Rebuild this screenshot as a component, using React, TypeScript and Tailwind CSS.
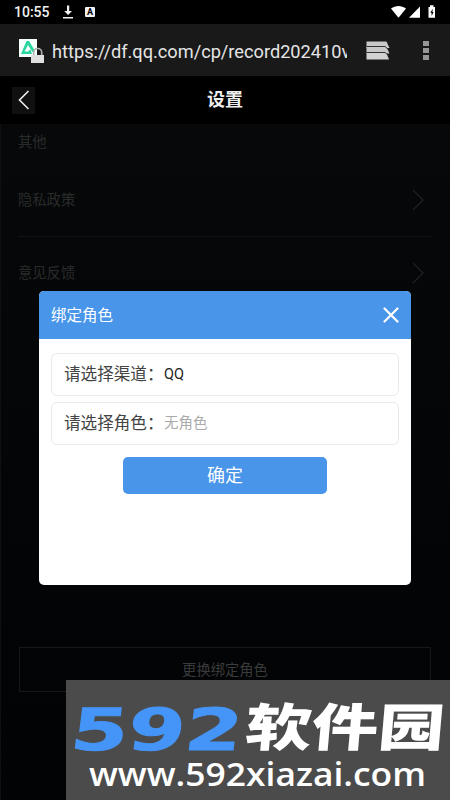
import { useState } from "react";

const StatusBar = () => (
  <div className="flex h-6 items-center justify-between bg-black pl-[14px] pr-[14px]">
    <div className="flex items-center">
      <span className="w-[49px] text-[14px] font-medium leading-6 text-[#f2f2f2]">10:55</span>
      <svg width="10" height="14" viewBox="0 0 10 14" fill="#f2f2f2">
        <path d="M4 0.500h2.200v5.500h2.800L5.100 10 1.200 6H4zM0 12h10v1.500H0z" />
      </svg>
      <span className="ml-3 flex h-[10px] w-[10px] items-center justify-center rounded-[1px] bg-[#f2f2f2] text-[9px] font-bold leading-none text-black">
        A
      </span>
    </div>
    <svg width="46" height="14" viewBox="0 0 46 14" fill="#fff">
      <path d="M1 3.600C5.500 0 11.500 0 16 3.600L8.500 12.700z" />
      <path d="M30 1.500v11.200H19z" />
      <path d="M40 0.300h3.500V2H45v10.700h-6.500V2H40z" />
      <path d="M42.800 3.800l-2.500 4h1.300v3.200l2-4h-1.200z" fill="#000" />
    </svg>
  </div>
);

const AddressBar = () => (
  <div className="flex h-[52px] items-center bg-[#191919] pl-[19px]">
    <svg width="26" height="26" viewBox="0 0 26 26" className="mt-[2px] shrink-0">
      <path d="M0 1h18v18H0z" fill="#f5fffb" />
      <path d="M7.500 3h2.500l6 10-2.500 1L9 7l-3.500 6.500H9l2.500-2 1.500 4.500H2z" fill="#27d6a0" />
      <path d="M14.700 17v-2.500a4 4 0 0 1 8 0V17" fill="none" stroke="#b0b0b0" strokeWidth="1.600" />
      <path d="M12 17h13v8H12z" fill="#e0e0e0" />
    </svg>
    <div className="ml-[7px] mt-[3px] w-[295px] overflow-hidden whitespace-nowrap text-[18.200px] leading-7 text-[#e5e5e5]">
      https://df.qq.com/cp/record202410v
    </div>
    <svg width="24" height="19" viewBox="0 0 24 19" className="ml-[19px] shrink-0">
      <path d="M0.500 0.500h20l3 6.500H0.500z" fill="#c8c8c8" />
      <path d="M0.500 6h20l3 6.500H0.500z" fill="#c8c8c8" />
      <path d="M0.500 12h20l2.500 6.500H0.500z" fill="#d2d2d2" />
      <path d="M0.500 5.500h18.500l3.500 3M0.500 11.500h18.500l3.500 3" fill="none" stroke="#333" strokeWidth="1" />
    </svg>
    <div className="ml-[33px] flex flex-col gap-[2px]">
      <span className="h-[5px] w-[6px] bg-[#969696]" />
      <span className="h-[5px] w-[6px] bg-[#969696]" />
      <span className="h-[5px] w-[6px] bg-[#969696]" />
    </div>
  </div>
);

const TitleBar = () => (
  <div className="grid h-12 grid-cols-3 items-center bg-black px-3">
    <button type="button" aria-label="返回" className="flex h-[27px] w-[23px] items-center justify-center bg-[#101010]">
      <svg width="12" height="20" viewBox="0 0 12 20" fill="none" stroke="#eee" strokeWidth="1.600">
        <path d="M10.500 1L1.500 10l9 9" />
      </svg>
    </button>
    <h1 className="text-center text-[18px] font-bold leading-6 text-[#eee]">设置</h1>
  </div>
);

const SettingRow = ({ label }: { label: string }) => (
  <div className="flex items-center justify-between pr-[7px]">
    <span>{label}</span>
    <svg width="12" height="22" viewBox="0 0 12 22" fill="none" stroke="#1d1f1f" strokeWidth="1.500">
      <path d="M1 1l10 10L1 21" />
    </svg>
  </div>
);

const Field = ({ label, value, muted }: { label: string; value: string; muted?: boolean }) => (
  <div className="flex h-[43px] items-center rounded-[6px] border border-[#e9e9e9] pl-3">
    <span className="w-[100px] whitespace-nowrap text-[16.600px] leading-6 text-[#444]">{label}</span>
    <span className={muted ? "text-[14.500px] text-[#aaa]" : "text-[14.500px] text-[#222]"}>{value}</span>
  </div>
);

const BindDialog = ({ onClose }: { onClose: () => void }) => (
  <div className="absolute left-[39px] top-[291px] h-[294px] w-[372px] overflow-hidden rounded-[5px] bg-white">
    <div className="flex h-12 items-center justify-between bg-[#4995ea] px-3 text-white">
      <h2 className="pt-[2px] text-[15.500px] leading-6">绑定角色</h2>
      <button type="button" aria-label="关闭" onClick={onClose}>
        <svg width="16" height="16" viewBox="0 0 16 16" fill="none" stroke="#fff" strokeWidth="2.200" strokeLinecap="round">
          <path d="M1.500 1.500l13 13M14.500 1.500l-13 13" />
        </svg>
      </button>
    </div>
    <div className="flex flex-col gap-[6px] px-3 pt-[14px]">
      <Field label="请选择渠道：" value="QQ" />
      <Field label="请选择角色：" value="无角色" muted />
      <button
        type="button"
        onClick={onClose}
        className="mt-[6px] flex h-[37px] w-[204px] items-center justify-center self-center rounded-[5px] bg-[#4995ea] text-[18px] text-white"
      >
        确定
      </button>
    </div>
  </div>
);

const Watermark = () => (
  <div className="absolute bottom-0 right-0 h-[120px] w-[384px] bg-[#4b4b4b]">
    <svg width="384" height="120" viewBox="0 0 384 120">
      <g transform="translate(3 70) skewX(-7)">
        <text
          x="0"
          y="0"
          textLength="171"
          lengthAdjust="spacingAndGlyphs"
          className="fill-[#4595f8] stroke-[#4595f8] stroke-1 font-['DejaVu_Sans'] text-[58px] font-bold"
        >
          592
        </text>
      </g>
      <g transform="translate(178 66) skewX(-5)">
        <text x="0" y="0" textLength="199" lengthAdjust="spacingAndGlyphs" className="fill-white font-['Noto_Sans_CJK_SC'] text-[51px] font-black">
          软件园
        </text>
      </g>
      <text x="23" y="106" textLength="337" lengthAdjust="spacingAndGlyphs" className="fill-white font-['Open_Sans'] text-[33px] font-semibold">
        www.592xiazai.com
      </text>
    </svg>
  </div>
);

export default function App() {
  const [open, setOpen] = useState(true);

  return (
    <div className="relative flex h-[800px] w-[450px] flex-col overflow-hidden bg-black font-['Roboto','Noto_Sans_CJK_SC',sans-serif]">
      <StatusBar />
      <AddressBar />
      <TitleBar />

      <main className="flex flex-1 flex-col border-l border-[#0e1011] bg-linear-to-b from-[#070809] to-[#020304] pl-[17px] pr-[19px] text-[14.300px] leading-6 text-[#292b2b]">
        <div className="pt-[6px]">其他</div>
        <div className="mt-[34px]">
          <SettingRow label="隐私政策" />
        </div>
        <div className="mt-6 border-t border-[#121414] pt-6">
          <SettingRow label="意见反馈" />
        </div>
        <button
          type="button"
          onClick={() => setOpen(true)}
          className="mb-[108px] ml-px mt-auto flex h-[45px] flex-col border border-[#171919] px-1 text-[#3a3b3b]"
        >
          <span className="flex h-[10px] w-full justify-end pr-1 font-mono text-[5px] leading-[10px] text-[#121414]">······ ···</span>
          <span className="h-6 w-full text-center">更换绑定角色</span>
          <span className="h-[9px] font-mono text-[5px] leading-[9px] text-[#121414]">··········</span>
        </button>
      </main>

      {open && <BindDialog onClose={() => setOpen(false)} />}
      <Watermark />
    </div>
  );
}
